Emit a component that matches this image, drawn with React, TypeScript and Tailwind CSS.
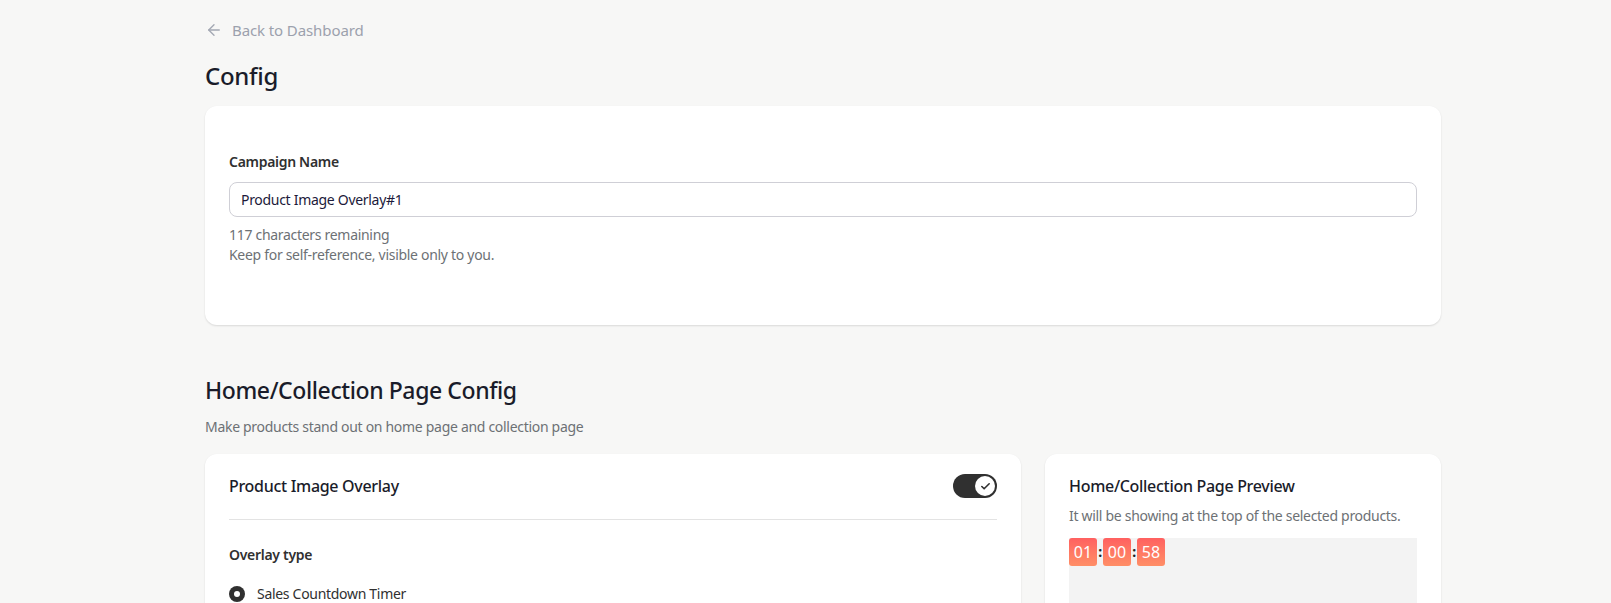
import { ArrowLeft, Check } from "lucide-react";

const timer = ["01", "00", "58"];

function Toggle({ on }: { on: boolean }) {
    return (
        <button
            type="button"
            className={`flex h-[24px] w-[44px] items-center rounded-full px-[2px] ${on ? "justify-end bg-[#303030]" : "justify-start bg-[#d4d4d4]"}`}
        >
            <span className="flex h-[20px] w-[20px] items-center justify-center rounded-full bg-white">
                <Check className="h-[11px] w-[11px] text-[#303030]" strokeWidth={3.5} />
            </span>
        </button>
    );
}

function Radio({ label, checked }: { label: string; checked: boolean }) {
    return (
        <label className="flex items-center gap-[12px] text-[14px] leading-[20px] text-[#303030]">
            <span
                className={`flex h-[16px] w-[16px] items-center justify-center rounded-full ${checked ? "bg-[#303030]" : "border border-[#8a8a8a] bg-white"}`}
            >
                {checked && <span className="h-[6px] w-[6px] rounded-full bg-white" />}
            </span>
            {label}
        </label>
    );
}

export default function App() {
    return (
        <div
            className="min-h-screen bg-[#f7f7f6] tracking-[-0.3px] text-[#1a1c2a]"
            style={{ fontFamily: '"Noto Sans", "Open Sans", sans-serif' }}
        >
            <div className="ml-[205px] w-[1236px] pt-[18px] pb-10">
                <a href="#" className="flex h-[24px] items-center gap-[9px] text-[15px] tracking-[-0.1px] text-[#9ca1ad]">
                    <ArrowLeft className="h-[18px] w-[18px] text-[#a3a8b3]" strokeWidth={1.8} />
                    Back to Dashboard
                </a>

                <h1 className="mt-[18px] text-[24px] leading-[32px] font-medium tracking-[-0.3px]">Config</h1>

                <section className="mt-[14px] rounded-[12px] bg-white px-6 pt-[46px] pb-[60px] shadow-[0_1px_2px_rgba(0,0,0,0.12)]">
                    <p className="text-[14px] leading-[20px] font-semibold text-[#303030]">Campaign Name</p>
                    <input
                        type="text"
                        defaultValue="Product Image Overlay#1"
                        className="mt-[10px] h-[35px] w-full rounded-[8px] border border-[#cfcfd6] px-[11px] text-[14px] text-[#1c1a3a] outline-none"
                    />
                    <p className="mt-[8px] text-[14px] leading-[20px] text-[#6d7175]">117 characters remaining</p>
                    <p className="text-[14px] leading-[20px] text-[#6d7175]">Keep for self-reference, visible only to you.</p>
                </section>

                <h2 className="mt-[49px] text-[23px] leading-[32px] font-medium tracking-[-0.4px]">Home/Collection Page Config</h2>
                <p className="mt-[11px] text-[14px] leading-[20px] text-[#6d7175]">
                    Make products stand out on home page and collection page
                </p>

                <div className="mt-[17px] flex items-start gap-[24px]">
                    <section className="w-[816px] rounded-[12px] bg-white px-6 pt-[20px] pb-6 shadow-[0_1px_2px_rgba(0,0,0,0.12)]">
                        <div className="flex items-center justify-between pb-[21px]">
                            <h3 className="text-[16px] leading-[24px] font-medium text-[#1a1c2a]">Product Image Overlay</h3>
                            <Toggle on />
                        </div>
                        <div className="h-px bg-[#e3e3e3]" />
                        <p className="mt-[25px] text-[14px] leading-[20px] font-semibold text-[#303030]">Overlay type</p>
                        <div className="mt-[19px] flex flex-col gap-3">
                            <Radio label="Sales Countdown Timer" checked />
                            <Radio label="Custom Badge" checked={false} />
                        </div>
                    </section>

                    <section className="w-[396px] rounded-[12px] bg-white px-6 pt-[20px] pb-6 shadow-[0_1px_2px_rgba(0,0,0,0.12)]">
                        <h3 className="text-[16px] leading-[24px] font-medium text-[#1a1c2a]">Home/Collection Page Preview</h3>
                        <p className="mt-[8px] text-[14px] leading-[20px] text-[#6d7175]">
                            It will be showing at the top of the selected products.
                        </p>
                        <div className="mt-[12px] h-[300px] bg-[#f3f3f3]">
                            <div className="flex items-center">
                                {timer.map((t, i) => (
                                    <div key={i} className="flex items-center">
                                        {i > 0 && (
                                            <span className="w-[6px] text-center text-[14px] font-bold leading-[20px] text-[#202020]">:</span>
                                        )}
                                        <span className="flex h-[28px] w-[28px] items-center justify-center rounded-[3px] bg-gradient-to-b from-[#ff6060] to-[#ff8e66] text-[16px] tracking-normal text-white">
                                            {t}
                                        </span>
                                    </div>
                                ))}
                            </div>
                        </div>
                    </section>
                </div>
            </div>
        </div>
    );
}
